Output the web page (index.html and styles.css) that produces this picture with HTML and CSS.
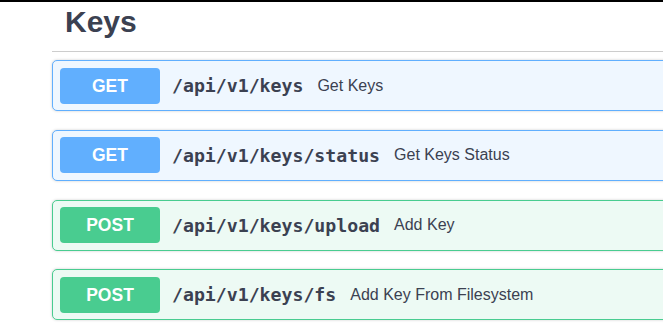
FILE: index.html
```html
<!DOCTYPE html>
<html lang="en">
<head>
  <meta charset="UTF-8">
  <title>Keys</title>
  <link rel="stylesheet" href="styles.css">
</head>
<body>
  <div class="topbar"></div>

  <div class="tag-section">
    <h3 class="tag">Keys</h3>

    <div class="opblock get">
      <span class="method">GET</span>
      <span class="path">/api/v1/keys</span>
      <span class="desc">Get Keys</span>
    </div>

    <div class="opblock get">
      <span class="method">GET</span>
      <span class="path">/api/v1/keys/status</span>
      <span class="desc">Get Keys Status</span>
    </div>

    <div class="opblock post">
      <span class="method">POST</span>
      <span class="path">/api/v1/keys/upload</span>
      <span class="desc">Add Key</span>
    </div>

    <div class="opblock post">
      <span class="method">POST</span>
      <span class="path">/api/v1/keys/fs</span>
      <span class="desc">Add Key From Filesystem</span>
    </div>
  </div>
</body>
</html>
```

FILE: styles.css
```css
body {
  margin: 0;
  background: #fff;
  font-family: "Liberation Sans", Arial, sans-serif;
  color: #3b4151;
  overflow: hidden;
}

.topbar {
  height: 2px;
  background: #000;
}

.tag-section {
  margin-left: 52px;
  width: 700px;
}

.tag {
  margin: 0;
  padding: 1.6px 0 11px 13px;
  font-size: 30px;
  line-height: 36px;
  font-weight: bold;
  color: #3b4151;
  border-bottom: 1.5px solid #cdcdcd;
}

/* bloques de operaciones */
.opblock {
  display: flex;
  align-items: center;
  margin-top: 8.5px;
  margin-bottom: 18.75px;
  padding: 6.5px 7px;
  border: 1.25px solid;
  border-radius: 5px;
  box-shadow: 0 0 3px rgba(0,0,0,0.19);
}

.opblock + .opblock {
  margin-top: 0;
}

.opblock.get {
  background: #eff7ff;
  border-color: #61affe;
}

.opblock.post {
  background: #edfaf4;
  border-color: #49cc90;
}

.method {
  width: 100px;
  height: 36px;
  line-height: 36px;
  text-align: center;
  border-radius: 4px;
  color: #fff;
  font-weight: bold;
  font-size: 17.5px;
}

.get .method {
  background: #61affe;
}

.post .method {
  background: #49cc90;
}

.path {
  padding: 0 12px;
  font-family: "DejaVu Sans Mono", monospace;
  font-weight: bold;
  font-size: 18.2px;
  color: #3b4151;
}

.desc {
  margin-left: 2px;
  font-size: 16px;
  color: #3b4151;
}
```
